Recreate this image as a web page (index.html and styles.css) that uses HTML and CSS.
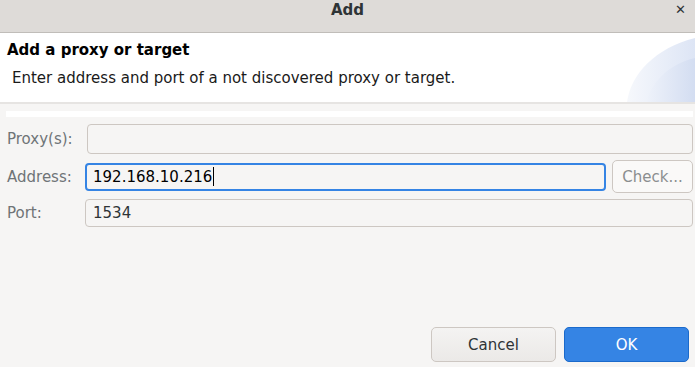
FILE: index.html
```html
<!DOCTYPE html>
<html lang="en">

<head>
    <meta charset="UTF-8">
    <title>Add</title>
    <link rel="stylesheet" href="styles.css">
</head>

<body>
    <div class="dialog">
        <div class="titlebar">
            <span class="title">Add</span>
            <span class="close">&#x2715;</span>
        </div>
        <div class="banner">
            <h1>Add a proxy or target</h1>
            <p>Enter address and port of a not discovered proxy or target.</p>
            <svg class="banner-art" width="70" height="68" viewBox="0 0 70 68">
                <defs>
                    <linearGradient id="g1" x1="0" y1="0" x2="1" y2="0">
                        <stop offset="0" stop-color="#f6f8fc"/>
                        <stop offset="1" stop-color="#dde5f5"/>
                    </linearGradient>
                    <linearGradient id="g2" x1="0" y1="0" x2="1" y2="0">
                        <stop offset="0" stop-color="#eef2fa"/>
                        <stop offset="1" stop-color="#d3ddf1"/>
                    </linearGradient>
                </defs>
                <path d="M2 68 C6 40 30 14 70 4 L70 68 Z" fill="url(#g1)"/>
                <path d="M22 68 C24 52 42 30 70 24 L70 68 Z" fill="url(#g2)"/>
            </svg>
        </div>
        <div class="body">
            <div class="strip"></div>
            <div class="row">
                <label class="lbl">Proxy(s):</label>
                <div class="field proxy"></div>
            </div>
            <div class="row">
                <label class="lbl">Address:</label>
                <div class="field focus">192.168.10.216<span class="caret"></span></div>
                <button class="btn check" disabled>Check...</button>
            </div>
            <div class="row">
                <label class="lbl">Port:</label>
                <div class="field">1534</div>
            </div>
        </div>
        <div class="actions">
            <button class="btn cancel">Cancel</button>
            <button class="btn ok">OK</button>
        </div>
    </div>
</body>

</html>
```

FILE: styles.css
```css
html, body {
    margin: 0;
    height: 100%;
}

body {
    font-family: "DejaVu Sans", "Noto Sans", sans-serif;
    font-size: 15px;
    color: #2e3436;
    background: #f6f5f4;
}

.dialog {
    display: flex;
    flex-direction: column;
    height: 367px;
}

.titlebar {
    height: 32px;
    background: #dedbd8;
    border-bottom: 1px solid #c0bdb9;
    display: flex;
    align-items: flex-start;
    justify-content: center;
    position: relative;
}

.title {
    font-weight: bold;
    font-size: 15px;
    color: #2e3436;
    margin-top: 1px;
}

.close {
    position: absolute;
    right: 9px;
    top: 2px;
    font-size: 13px;
    font-weight: bold;
    color: #2e3436;
}

.banner {
    background: #fff;
    height: 69px;
    position: relative;
    border-bottom: 2px solid #e6e4e2;
    padding: 0 0 0 7px;
}

.banner h1 {
    margin: 0;
    padding-top: 8px;
    font-size: 15px;
    font-weight: bold;
    color: #000;
}

.banner p {
    margin: 10px 0 0 5px;
    font-size: 15px;
    color: #1a1a1a;
}

.banner-art {
    position: absolute;
    right: 0;
    bottom: 0;
}

.body {
    flex: 1;
    padding: 0 2px 0 6px;
}

.strip {
    height: 6px;
    background: #fff;
    margin-top: 7px;
    margin-bottom: 7px;
}

.row {
    display: flex;
    align-items: center;
    gap: 6px;
    margin-bottom: 6px;
}

.lbl {
    width: 72px;
    color: #6f7477;
    font-size: 15px;
    padding-left: 1px;
}

.field {
    flex: 1;
    height: 28px;
    box-sizing: border-box;
    border: 1px solid #cdc7c2;
    border-radius: 4px;
    background: #f6f5f4;
    display: flex;
    align-items: center;
    padding-left: 7px;
    color: #2e3436;
}

.field.proxy {
    margin-left: 2px;
    height: 30px;
}

.field.focus {
    border: 2px solid #3584e4;
    padding-left: 6px;
    color: #000;
}

.caret {
    display: inline-block;
    width: 1px;
    height: 19px;
    background: #000;
    margin-left: 1px;
}

.btn {
    font-family: "DejaVu Sans", "Noto Sans", sans-serif;
    font-size: 15px;
    border: 1px solid #cdc7c2;
    border-radius: 5px;
    background: #f6f5f4;
    color: #2e3436;
    box-sizing: border-box;
}

.check {
    width: 81px;
    height: 33px;
    color: #8b8e8f;
    background: #faf9f8;
}

.actions {
    display: flex;
    justify-content: flex-end;
    gap: 8px;
    padding: 0 6px 5px 0;
}

.cancel {
    width: 125px;
    height: 35px;
    background: linear-gradient(#f4f3f2, #ebe9e7);
}

.ok {
    width: 125px;
    height: 35px;
    background: #3584e4;
    border-color: #1b6acb;
    color: #fff;
}
```
